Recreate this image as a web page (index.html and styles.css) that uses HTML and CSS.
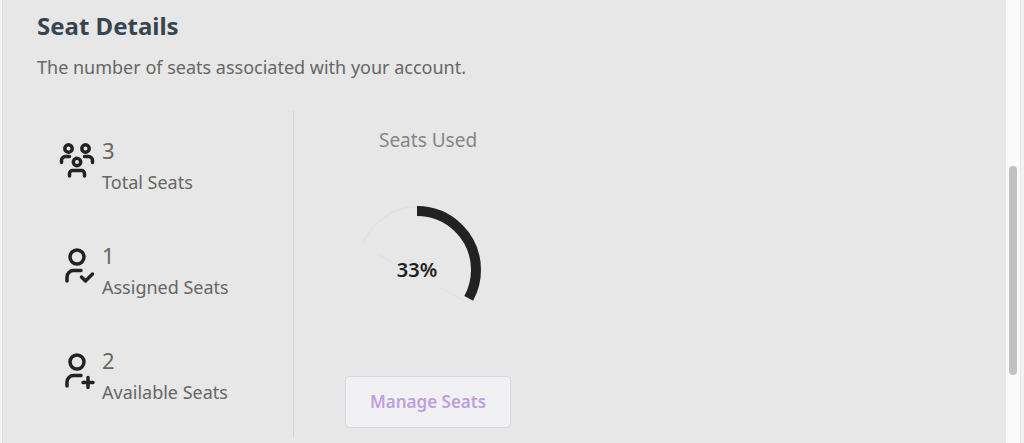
FILE: index.html
```
<!DOCTYPE html>
<html lang="en">
<head>
  <meta charset="UTF-8" />
  <meta name="viewport" content="width=device-width, initial-scale=1.0"/>
  <title>Seat Details</title>
  <link rel="stylesheet" href="styles.css">
</head>
<body>
  <main class="panel">
    <h1>Seat Details</h1>
    <p class="intro">The number of seats associated with your account.</p>

    <div class="details">
      <ul class="stats">
        <li>
          <svg class="icon" viewBox="0 0 36 40" aria-hidden="true">
            <circle cx="9.5" cy="8.5" r="3.700"/>
            <circle cx="26.5" cy="8.5" r="3.700"/>
            <circle cx="18" cy="22" r="3.700"/>
            <path d="M2.5 22.5v-2a4 4 0 0 1 4-4h4"/>
            <path d="M25.500 16.500h4a4 4 0 0 1 4 4v2"/>
            <path d="M10.500 36v-2.500a3 3 0 0 1 3-3h9a3 3 0 0 1 3 3v2.500"/>
          </svg>
          <div>
            <div class="count">3</div>
            <div class="label">Total Seats</div>
          </div>
        </li>
        <li>
          <svg class="icon" viewBox="0 0 36 40" aria-hidden="true">
            <circle cx="18" cy="12" r="7"/>
            <path d="M8 36v-4a6.500 6.500 0 0 1 6.500-6.500h7.500"/>
            <path d="M22.500 32l4 4 7-7"/>
          </svg>
          <div>
            <div class="count">1</div>
            <div class="label">Assigned Seats</div>
          </div>
        </li>
        <li>
          <svg class="icon" viewBox="0 0 36 40" aria-hidden="true">
            <circle cx="18" cy="12" r="7"/>
            <path d="M8 36v-4a6.500 6.500 0 0 1 6.500-6.500h7.500"/>
            <path d="M24 32.500h10M29 27.500v10"/>
          </svg>
          <div>
            <div class="count">2</div>
            <div class="label">Available Seats</div>
          </div>
        </li>
      </ul>

      <section class="usage">
        <h2>Seats Used</h2>
        <svg class="donut" viewBox="0 0 128 128" role="img" aria-label="33% of seats used">
          <path class="rest" d="M10 37A61 61 0 0 1 64 .5M24 48l18 10M86 81l24 13"/>
          <circle class="used" cx="64" cy="64" r="59" pathLength="100" stroke-dasharray="33 67" transform="rotate(-90 64 64)"/>
          <text x="64" y="71">33%</text>
        </svg>
        <button type="button">Manage Seats</button>
      </section>
    </div>
  </main>
  <div class="track"><div class="thumb"></div></div>
</body>
</html>
```
FILE: styles.css
```
* {
  box-sizing: border-box;
}

body {
  margin: 0;
  height: 100vh;
  display: flex;
  overflow: hidden;
  background: #f3f3f3;
  color: #666;
  font-family: "Noto Sans", sans-serif;
  font-size: 18px;
  line-height: 24px;
}

.panel {
  flex: 1;
  padding: 11px 34px 0;
  border-left: 1px solid #dedede;
  margin-left: 2px;
  background: #e7e7e7;
}

h1 {
  margin: 0;
  color: #36454f;
  font-size: 24px;
  line-height: 30px;
}

.intro {
  margin: 14px 0 32px;
}

.details {
  display: flex;
  align-items: flex-start;
}

.stats {
  margin: 0;
  padding: 24px 0 28px 22px;
  width: 257px;
  display: flex;
  flex-direction: column;
  gap: 41px;
  list-style: none;
  border-right: 1px solid #d2d2d2;
}

.stats li {
  display: flex;
  gap: 7px;
}

.icon {
  width: 36px;
  height: 40px;
  margin-top: 5px;
  fill: none;
  stroke: #222;
  stroke-width: 3.5;
  stroke-linecap: round;
  stroke-linejoin: round;
}

.count {
  font-size: 22px;
  line-height: 30px;
}

.label {
  line-height: 34px;
}

.usage {
  padding: 17px 0 0 51px;
  display: flex;
  flex-direction: column;
  align-items: center;
}

h2 {
  margin: 0 0 54px;
  color: #858585;
  font-size: 19px;
  font-weight: 400;
}

.donut {
  width: 128px;
  height: 128px;
  margin: 0 22px 42px 0;
}

.rest {
  fill: none;
  stroke: #dedede;
}

.used {
  fill: none;
  stroke: #222;
  stroke-width: 10;
}

.donut text {
  fill: #222;
  font-size: 20px;
  font-weight: 600;
  text-anchor: middle;
}

button {
  padding: 13px 24px;
  border: 1px solid #dfd3ea;
  border-radius: 5px;
  background: #f1f1f4;
  color: #bf9fdd;
  font: inherit;
  font-size: 17px;
  font-weight: 600;
}

.track {
  width: 18px;
  padding: 166px 6px 0 3px;
  background: linear-gradient(to right, #fafafa 14px, #e5e5e5 14px, #e5e5e5 15px, #f3f3f3 15px);
}

.thumb {
  width: 8px;
  height: 209px;
  border-radius: 4px;
  background: #c1c1c1;
}
```
